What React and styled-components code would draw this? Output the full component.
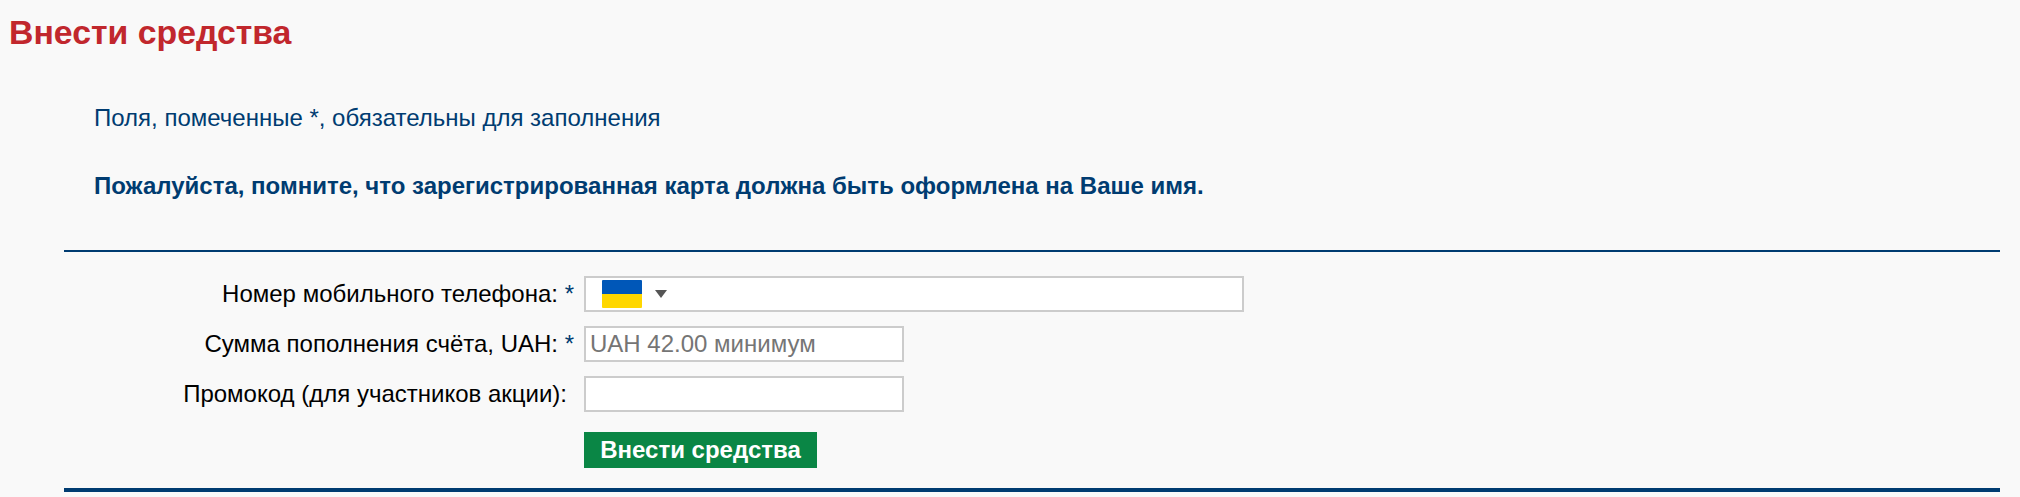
import React from 'react'
import styled, { createGlobalStyle } from 'styled-components'

const GlobalStyle = createGlobalStyle`
  html, body {
    margin: 0;
    padding: 0;
    background: #f9f9f9;
  }
  body {
    font-family: "Liberation Sans", Arial, sans-serif;
  }
`

const Page = styled.div`
  width: 2020px;
  height: 497px;
  overflow: hidden;
  padding-top: 12px;
  box-sizing: border-box;
`

const Title = styled.h1`
  margin: 0 0 0 9px;
  font-size: 33.8px;
  line-height: 40px;
  font-weight: 700;
  color: #c1272d;
`

const Section = styled.div`
  margin: 0 20px 0 64px;
`

const Intro = styled.div`
  display: flex;
  flex-direction: column;
  gap: 40px;
  padding: 52px 0 50px 30px;
`

const Note = styled.p`
  margin: 0;
  font-size: 24px;
  line-height: 28px;
  font-weight: ${p => (p.$bold ? 700 : 400)};
  color: #003c71;
`

const Form = styled.form`
  border-top: 2px solid #003c71;
  border-bottom: 4px solid #003c71;
  padding: 24px 0 20px;
  display: grid;
  grid-template-columns: 520px 1fr;
  row-gap: 14px;
`

const Label = styled.label`
  display: flex;
  align-items: center;
  justify-content: flex-end;
  padding-right: ${p => (p.$required ? '10px' : '17px')};
  font-size: 24px;
  color: #000;
  white-space: pre;
`

const Star = styled.span`
  color: #003c71;
`

const Field = styled.div`
  display: flex;
  align-items: center;
  box-sizing: border-box;
  width: ${p => p.$width}px;
  height: 36px;
  background: #fff;
  border: 2px solid #ccc;
`

const Input = styled.input`
  width: 100%;
  height: 100%;
  box-sizing: border-box;
  border: 0;
  outline: 0;
  padding: 0 4px;
  background: transparent;
  font-family: inherit;
  font-size: 24px;

  &::placeholder {
    color: #757575;
    opacity: 1;
  }
`

const Country = styled.div`
  display: flex;
  align-items: center;
  gap: 13px;
  padding-left: 16px;
`

const Flag = styled.div`
  width: 40px;
  height: 28px;
  border-radius: 1px;
  background: linear-gradient(#0057b8 50%, #ffd700 50%);
`

const Arrow = styled.div`
  width: 0;
  height: 0;
  border-left: 6px solid transparent;
  border-right: 6px solid transparent;
  border-top: 8px solid #555;
`

const Submit = styled.button`
  grid-column: 2;
  width: 233px;
  height: 36px;
  margin-top: 6px;
  padding: 0;
  border: 0;
  background: #0a8645;
  color: #fff;
  font-family: inherit;
  font-size: 24px;
  font-weight: 700;
`

export default function App() {
  return (
    <Page>
      <GlobalStyle />
      <Title>Внести средства</Title>
      <Section>
        <Intro>
          <Note>Поля, помеченные *, обязательны для заполнения</Note>
          <Note $bold>Пожалуйста, помните, что зарегистрированная карта должна быть оформлена на Ваше имя.</Note>
        </Intro>
        <Form>
          <Label $required>Номер мобильного телефона: <Star>*</Star></Label>
          <Field $width={660}>
            <Country>
              <Flag />
              <Arrow />
            </Country>
          </Field>
          <Label $required>Сумма пополнения счёта, UAH: <Star>*</Star></Label>
          <Field $width={320}>
            <Input placeholder="UAH 42.00 минимум" />
          </Field>
          <Label>Промокод (для участников акции):</Label>
          <Field $width={320}>
            <Input />
          </Field>
          <Submit type="button">Внести средства</Submit>
        </Form>
      </Section>
    </Page>
  )
}
